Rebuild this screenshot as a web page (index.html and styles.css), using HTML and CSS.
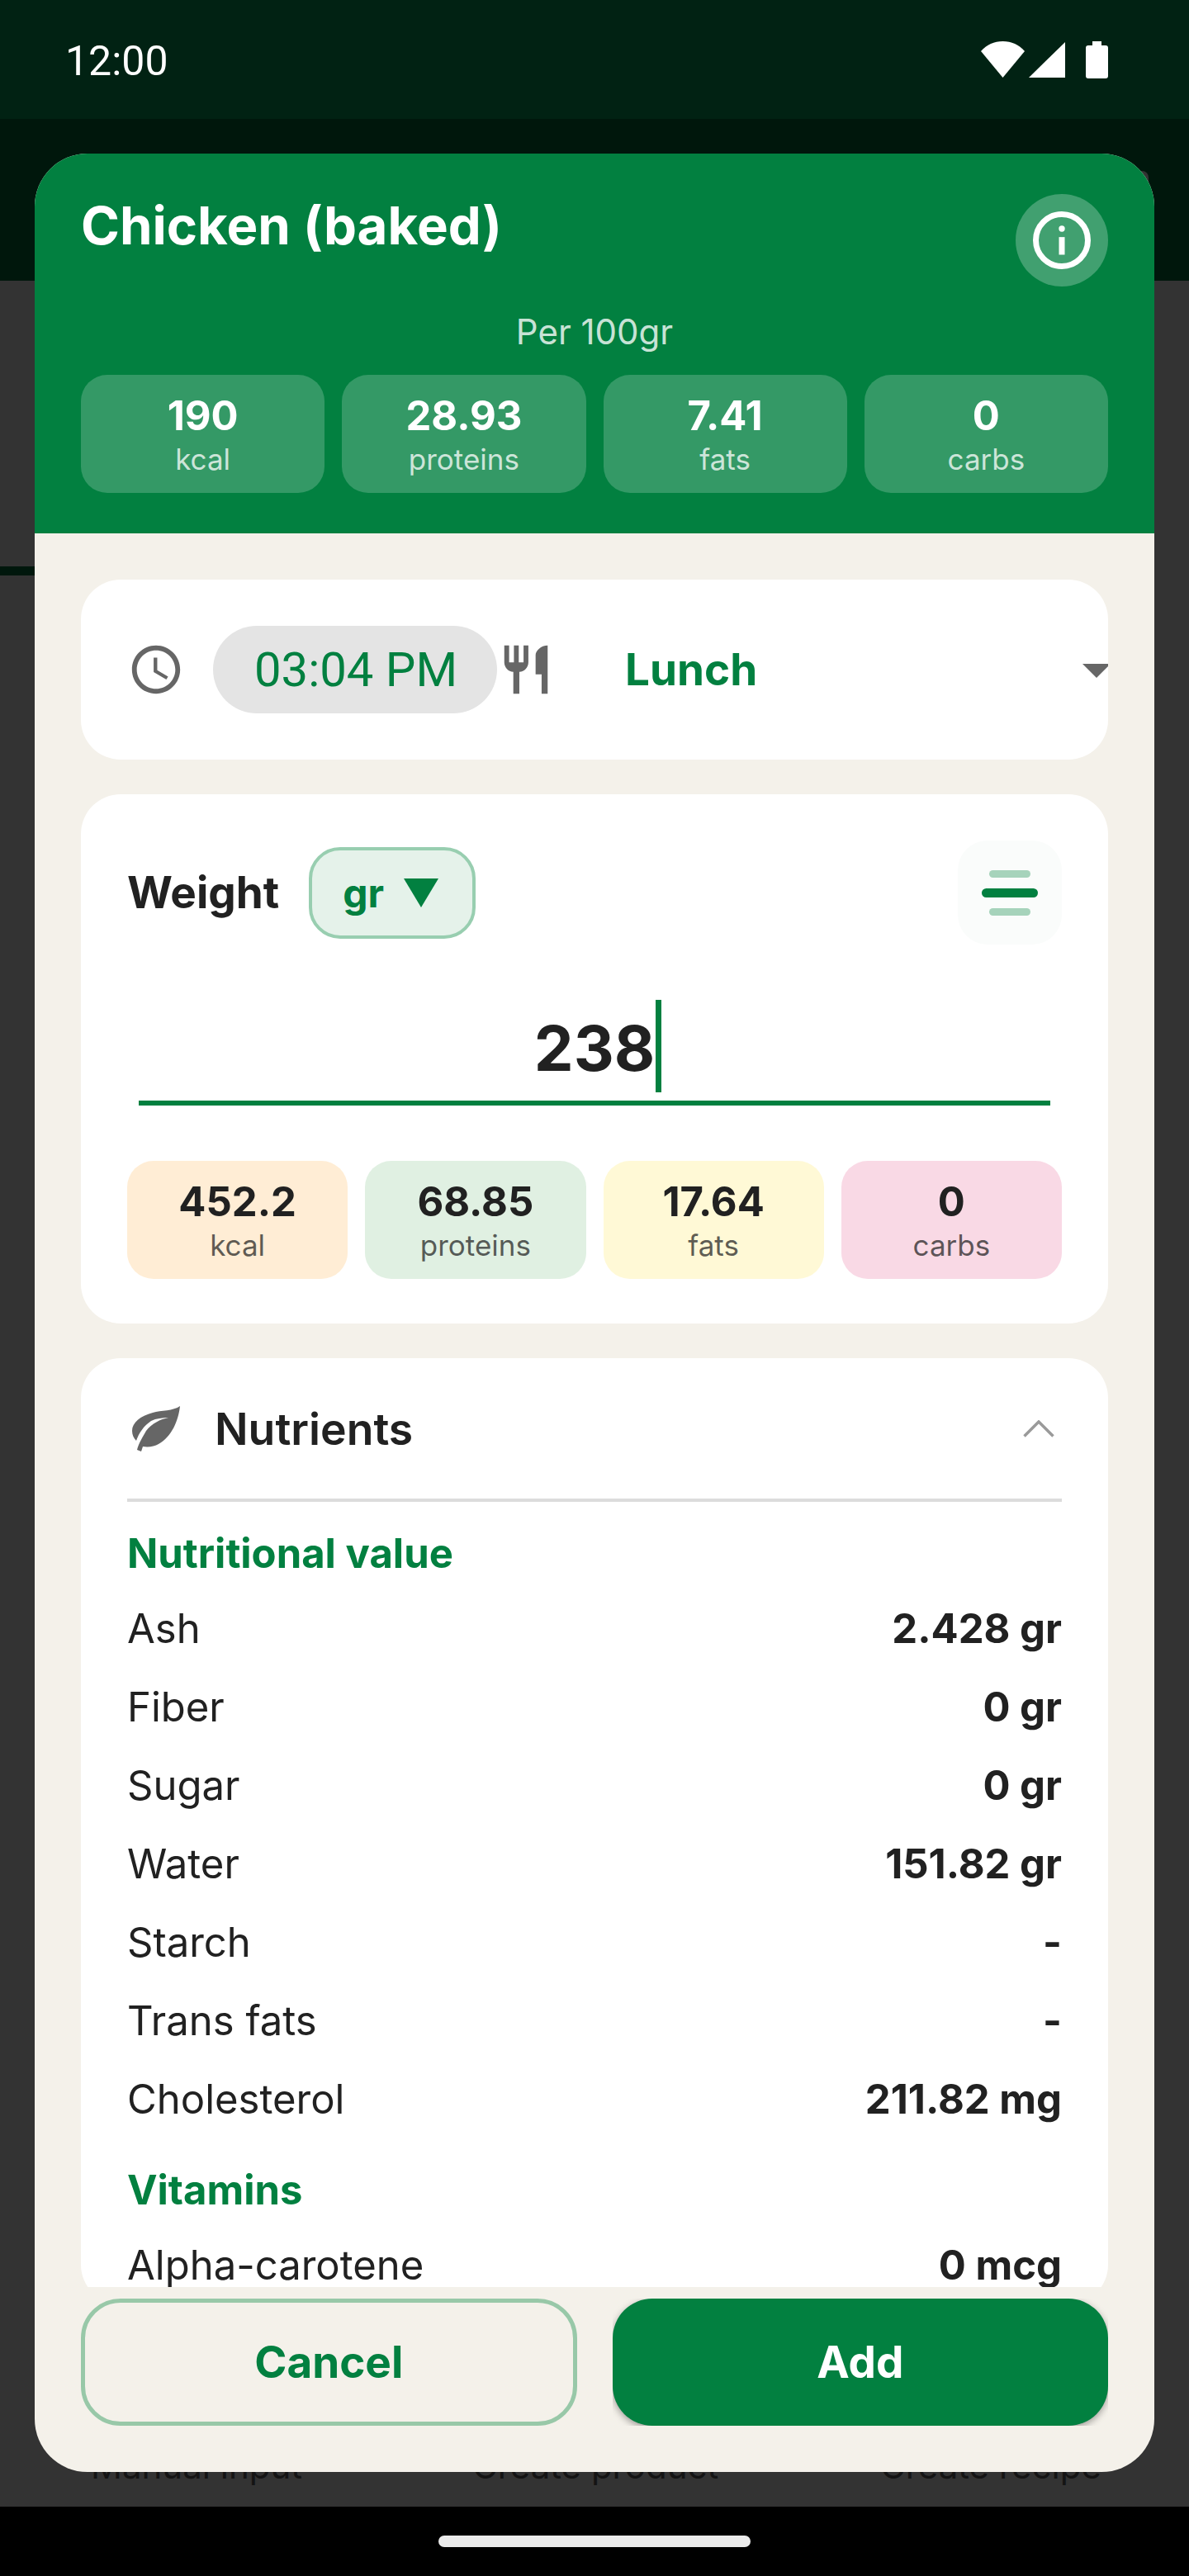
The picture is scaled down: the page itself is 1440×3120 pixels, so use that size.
FILE: index.html
```html
<!DOCTYPE html>
<html lang="en">
<head>
<meta charset="utf-8">
<title>Chicken (baked)</title>
<link rel="stylesheet" href="styles.css">
</head>
<body>
<div class="screen">
  <header class="statusbar">
    <span class="clock-text">12:00</span>
    <div class="status-icons">
      <svg class="ic-wifi" viewBox="0 0 53 44"><path d="M0 12C7 4 16 0 26.500 0S46 4 53 12L26.500 44Z"/></svg>
      <svg class="ic-signal" viewBox="0 0 44 43"><path d="M44 0V43H0Z"/></svg>
      <svg class="ic-battery" viewBox="0 0 27 45"><path d="M8 0H19V5H24A3 3 0 0 1 27 8V42A3 3 0 0 1 24 45H3A3 3 0 0 1 0 42V8A3 3 0 0 1 3 5H8Z"/></svg>
    </div>
  </header>
  <div class="appbar"><span class="appbar-chip"></span></div>
  <main class="page">
    <span class="page-stripe"></span>
    <div class="quick-actions">
      <span class="qa qa-manual">Manual input</span>
      <span class="qa qa-product">Create product</span>
      <span class="qa qa-recipe">Create recipe</span>
    </div>
  </main>
  <div class="navbar"><span class="home-pill"></span></div>

  <section class="modal">
    <div class="modal-head">
      <div class="title-row">
        <h1 class="title">Chicken (baked)</h1>
        <button class="info-btn">
          <svg viewBox="0 0 24 24" class="ic-info"><circle cx="12" cy="12" r="9" fill="none" stroke="#fff" stroke-width="2"/><circle cx="12" cy="8" r="1.050" fill="#fff"/><rect x="11" y="10.900" width="2" height="6.100" fill="#fff"/></svg>
        </button>
      </div>
      <div class="per">Per 100gr</div>
      <div class="stats stats-head">
        <div class="stat"><b>190</b><span>kcal</span></div>
        <div class="stat"><b>28.93</b><span>proteins</span></div>
        <div class="stat"><b>7.41</b><span>fats</span></div>
        <div class="stat"><b>0</b><span>carbs</span></div>
      </div>
    </div>

    <div class="modal-body">
      <div class="scroll">
        <div class="card time-card">
          <svg class="ic70" viewBox="0 0 24 24"><path d="M11.990 2C6.470 2 2 6.480 2 12s4.470 10 9.990 10C17.520 22 22 17.520 22 12S17.520 2 11.990 2zM12 20c-4.420 0-8-3.580-8-8s3.580-8 8-8 8 3.580 8 8-3.580 8-8 8zm.5-13H11v6l5.250 3.150.75-1.230-4.500-2.670z"/></svg>
          <div class="time-pill">03:04 PM</div>
          <svg class="ic70 ic-cutlery" viewBox="0 0 24 24"><path d="M11 9H9V2H7v7H5V2H3v7c0 2.120 1.660 3.840 3.750 3.970V22h2.500v-9.030C11.340 12.840 13 11.120 13 9V2h-2v7zm5-3v8h2.500v8H21V2c-2.760 0-5 2.240-5 4z"/></svg>
          <div class="meal">Lunch</div>
          <span class="meal-arrow"></span>
        </div>

        <div class="card weight-card">
          <div class="weight-row">
            <span class="weight-label">Weight</span>
            <div class="unit-chip"><span>gr</span><i class="unit-arrow"></i></div>
            <div class="sheet-btn"><i class="bar bar-s"></i><i class="bar bar-l"></i><i class="bar bar-s"></i></div>
          </div>
          <div class="weight-input"><span class="weight-value">238<i class="caret"></i></span></div>
          <div class="stats stats-result">
            <div class="stat stat-kcal"><b>452.2</b><span>kcal</span></div>
            <div class="stat stat-prot"><b>68.85</b><span>proteins</span></div>
            <div class="stat stat-fat"><b>17.64</b><span>fats</span></div>
            <div class="stat stat-carb"><b>0</b><span>carbs</span></div>
          </div>
        </div>

        <div class="card nutrients-card">
          <div class="nutrients-head">
            <svg class="ic-leaf" viewBox="0 0 58 55"><path d="M58 0C50 6 35 5 25 8C10 12 0 20 0 30C0 35 2 39 5 42C8 33 14 24 23 18C29 15 37 14 44 14C34 16 24 21 17 30C13 37 8 45 6 53L11 55L13 49C20 50 27 49 32 46C48 37 56 18 58 0Z"/></svg>
            <span class="nutrients-title">Nutrients</span>
            <svg class="ic-chevron" viewBox="0 0 38 21"><path d="M1.500 19.500L19 2L36.500 19.500" fill="none" stroke="#9a9a9a" stroke-width="3.500"/></svg>
          </div>
          <h2 class="group">Nutritional value</h2>
          <div class="row"><span>Ash</span><b>2.428 gr</b></div>
          <div class="row"><span>Fiber</span><b>0 gr</b></div>
          <div class="row"><span>Sugar</span><b>0 gr</b></div>
          <div class="row"><span>Water</span><b>151.82 gr</b></div>
          <div class="row"><span>Starch</span><b>-</b></div>
          <div class="row"><span>Trans fats</span><b>-</b></div>
          <div class="row"><span>Cholesterol</span><b>211.82 mg</b></div>
          <h2 class="group">Vitamins</h2>
          <div class="row"><span>Alpha-carotene</span><b>0 mcg</b></div>
        </div>
      </div>
      <div class="actions">
        <button class="btn btn-cancel">Cancel</button>
        <div class="add-clip"><button class="btn btn-add">Add</button></div>
      </div>
    </div>
  </section>
</div>
</body>
</html>
```
FILE: styles.css
```css
* { box-sizing: border-box; }
html, body { margin: 0; padding: 0; }
body { font-family: "Inter", "Liberation Sans", sans-serif; color: #212121; background: #333; }
.screen { position: relative; width: 1440px; height: 3120px; overflow: hidden; display: flex; flex-direction: column; background: #333; }

.statusbar { height: 144px; background: #012213; display: flex; align-items: center; justify-content: space-between; padding: 0 98px 0 79px; flex: none; }
.clock-text { font-family: "Roboto", sans-serif; font-size: 50px; color: #fff; margin-top: 3px; }
.status-icons { display: flex; align-items: center; }
.status-icons svg { fill: #fff; display: block; }
.ic-wifi { width: 53px; height: 44px; margin-right: 5px; }
.ic-signal { width: 44px; height: 43px; margin-right: 25px; }
.ic-battery { width: 27px; height: 45px; }

.appbar { height: 196px; background: #00170c; position: relative; flex: none; }
.appbar-chip { position: absolute; left: 1340px; top: 63px; width: 51px; height: 60px; border-radius: 8px; background: #333; }

.page { flex: 1; position: relative; background: #333; }
.page-stripe { position: absolute; left: 0; top: 346px; width: 60px; height: 11px; background: #00170c; }
.quick-actions { position: absolute; left: 0; right: 0; top: 2619px; }
.qa { position: absolute; top: 0; font-size: 42px; line-height: 56px; color: #141414; white-space: nowrap; }
.qa-manual { left: 110px; }
.qa-product { left: 572px; }
.qa-recipe { left: 1066px; }

.navbar { height: 84px; background: #000; display: flex; justify-content: center; padding-top: 35px; flex: none; }
.home-pill { width: 378px; height: 14px; border-radius: 7px; background: #ebebeb; }

.modal { position: absolute; left: 42px; top: 186px; width: 1356px; height: 2808px; border-radius: 64px; overflow: hidden; background: #f4f1ea; display: flex; flex-direction: column; }

.modal-head { background: #028040; padding: 49px 56px; height: 460px; flex: none; color: #fff; }
.title-row { display: flex; justify-content: space-between; align-items: flex-start; height: 112px; }
.title { margin: 0; font-size: 63.500px; line-height: 76px; font-weight: 700; }
.info-btn { width: 112px; height: 112px; border: 0; padding: 0; border-radius: 50%; background: rgba(255, 255, 255, .25); display: flex; align-items: center; justify-content: center; }
.ic-info { width: 84px; height: 84px; display: block; }
.per { text-align: center; font-size: 42px; line-height: 56px; margin-top: 27px; color: rgba(255, 255, 255, .8); }

.stats { display: grid; grid-template-columns: repeat(4, 1fr); gap: 21px; }
.stats-head { margin-top: 24px; }
.stat { height: 143px; border-radius: 32px; display: flex; flex-direction: column; align-items: center; padding-top: 20px; }
.stat b { font-size: 49px; line-height: 60px; font-weight: 700; }
.stat span { font-size: 35px; line-height: 44px; }
.stats-head .stat { background: rgba(255, 255, 255, .2); }
.stats-head .stat span { color: rgba(255, 255, 255, .75); }
.stats-result .stat span { color: rgba(33, 33, 33, .72); }
.stat-kcal { background: #ffedd5; }
.stat-prot { background: #e0f0e2; }
.stat-fat { background: #fff9d6; }
.stat-carb { background: #f9d9e5; }

.modal-body { flex: 1; display: flex; flex-direction: column; min-height: 0; }
.scroll { height: 2124px; overflow: hidden; padding: 56px 56px 0; flex: none; }
.card { background: #fff; border-radius: 48px; }

.time-card { height: 218px; display: flex; align-items: center; padding-left: 56px; overflow: hidden; position: relative; }
.ic70 { width: 70px; height: 70px; fill: #666; flex: none; display: block; }
.time-pill { margin-left: 34px; padding-left: 2px; width: 344px; height: 106px; border-radius: 53px; background: #e4e4e4; color: #028040; font-family: "Roboto", sans-serif; font-size: 58px; line-height: 106px; text-align: center; flex: none; }
.meal { margin-left: 85px; color: #028040; font-size: 53px; font-weight: 700; line-height: 64px; }
.meal-arrow { position: absolute; right: -3px; top: 102px; width: 0; height: 0; border-left: 17px solid transparent; border-right: 17px solid transparent; border-top: 17px solid #666; }

.weight-card { height: 641px; margin-top: 42px; padding: 56px; }
.weight-row { display: flex; align-items: center; height: 126px; }
.weight-label { font-size: 53px; font-weight: 700; }
.unit-chip { margin-left: 36px; width: 202px; height: 111px; border: 4px solid #98ceb0; border-radius: 38px; background: #e5f2ea; color: #028040; display: flex; align-items: center; padding-left: 37px; font-size: 48px; font-weight: 700; }
.unit-arrow { margin-left: 24px; width: 0; height: 0; border-left: 21.500px solid transparent; border-right: 21.500px solid transparent; border-top: 35px solid #028040; }
.sheet-btn { margin-left: auto; width: 126px; height: 126px; border-radius: 36px; background: #fafcfb; display: flex; flex-direction: column; align-items: center; justify-content: center; gap: 13px; }
.bar { display: block; border-radius: 6px; }
.bar-s { width: 50px; height: 9px; background: #a6d3bb; }
.bar-l { width: 68px; height: 11px; background: #028040; }

.weight-input { margin: 56px 14px 0; height: 139px; border-bottom: 6px solid #028040; display: flex; justify-content: center; align-items: center; }
.weight-value { position: relative; font-size: 76px; line-height: 100px; font-weight: 700; margin-top: 5px; }
.caret { position: absolute; left: 100%; top: -8px; margin-left: 1px; width: 7px; height: 112px; background: #028040; }
.stats-result { margin-top: 67px; }

.nutrients-card { margin-top: 42px; padding: 0 56px; }
.nutrients-head { height: 174px; display: flex; align-items: center; border-bottom: 4px solid #dcdcdc; }
.ic-leaf { width: 58px; height: 55px; fill: #666; margin-left: 6px; flex: none; }
.nutrients-title { margin-left: 42px; font-size: 53.500px; font-weight: 600; }
.ic-chevron { width: 38px; height: 21px; margin-left: auto; margin-right: 9px; }

.group { margin: 28px 0 8px; color: #028040; font-size: 49px; line-height: 70px; font-weight: 700; }
.row { height: 95px; display: flex; justify-content: space-between; align-items: center; font-size: 49px; color: #212121; }
.row b { font-weight: 700; }

.actions { display: grid; grid-template-columns: 1fr 1fr; gap: 43px; padding: 14px 56px 0; }
.btn { width: 100%; height: 154px; border-radius: 48px; font-family: inherit; font-size: 53px; font-weight: 700; display: block; }
.btn-cancel { background: #f4f1ea; color: #028040; border: 5px solid #98c8a8; }
.add-clip { height: 154px; overflow: hidden; }
.btn-add { background: #028040; color: #fff; border: 0; box-shadow: 0 3px 8px rgba(0, 0, 0, .35); }
```
